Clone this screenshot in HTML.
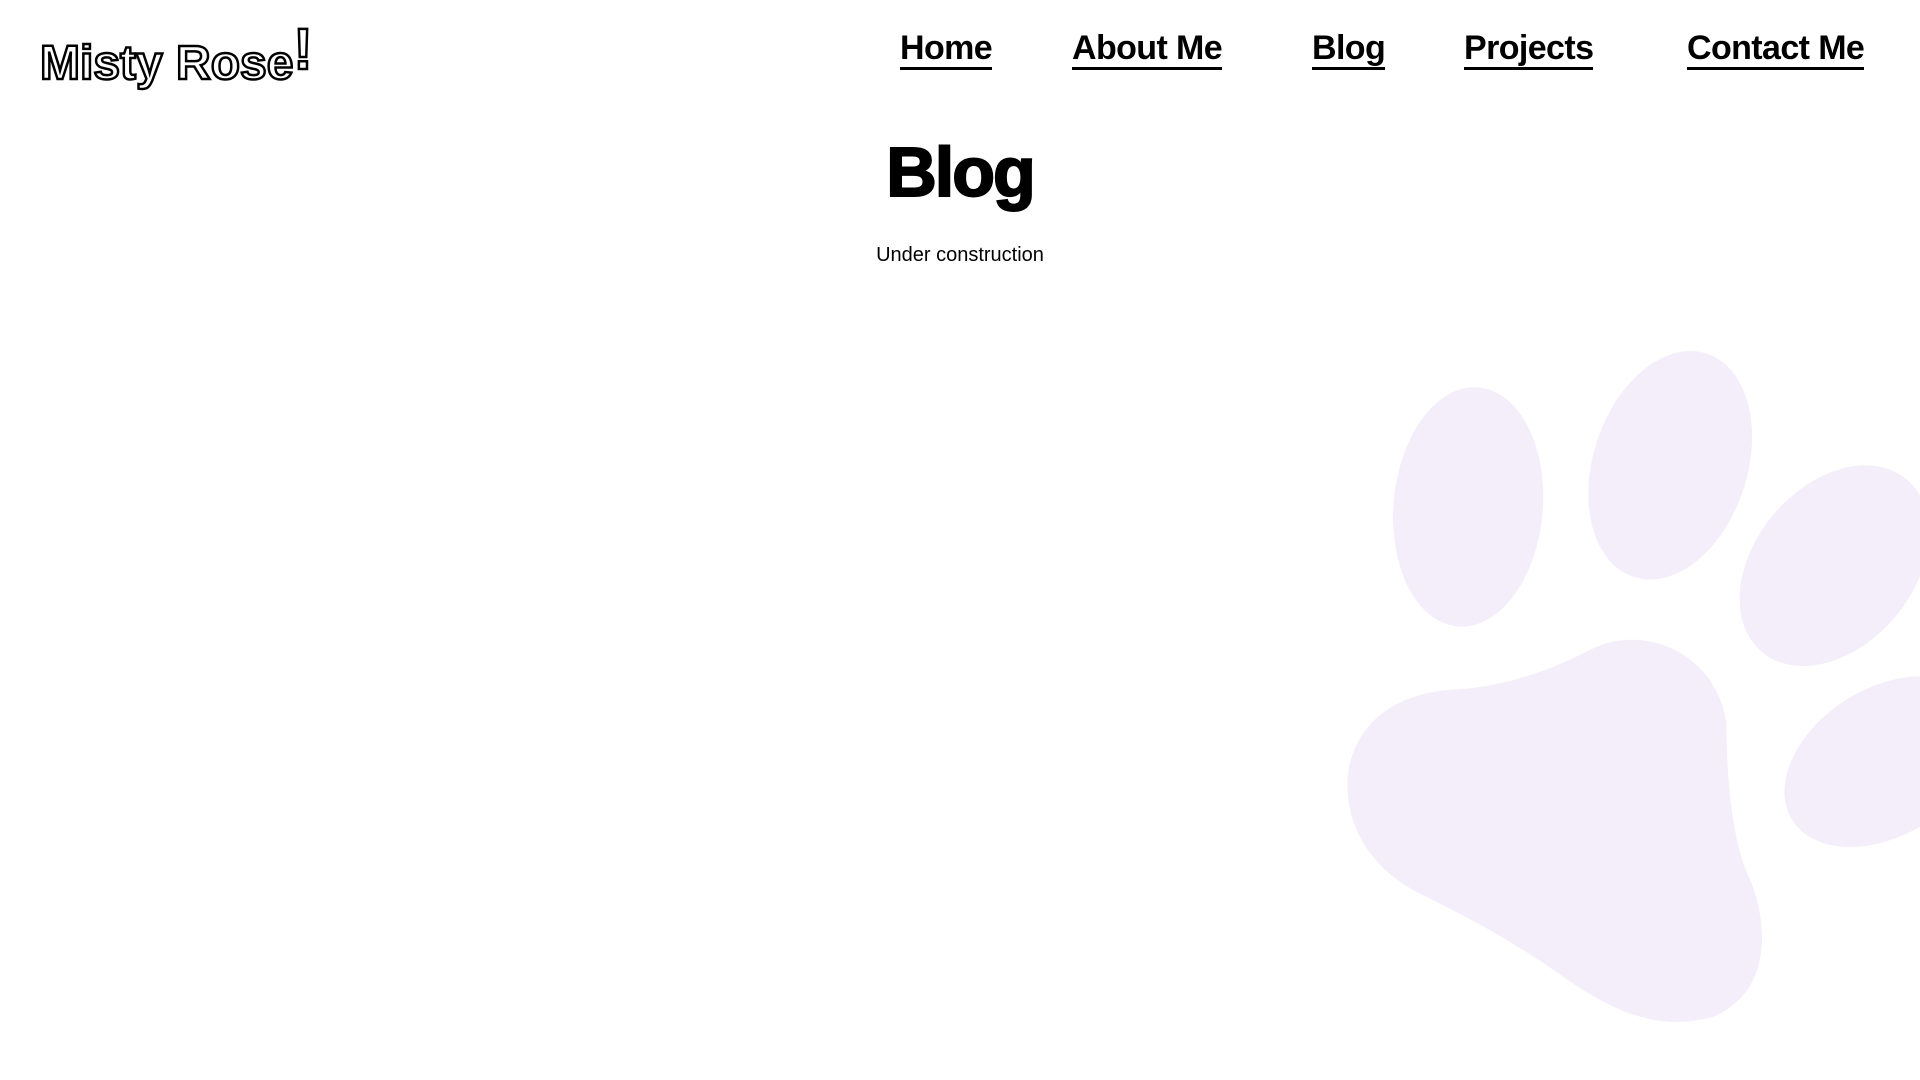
<!DOCTYPE html>
<html><head><meta charset="utf-8"><style>
html,body{margin:0;padding:0;width:1920px;height:1080px;background:#fff;overflow:hidden;font-family:"Liberation Sans",sans-serif;position:relative}
svg.bg{position:absolute;left:0;top:0;width:1920px;height:1080px}
.nav a{position:absolute;top:30px;font-weight:bold;font-size:34px;color:#000;text-decoration:none;border-bottom:3px solid #000;line-height:36px;padding-bottom:1px;letter-spacing:-0.6px}
h1{position:absolute;left:0;width:1920px;text-align:center;top:132px;margin:0;font-size:70px;font-weight:bold;letter-spacing:-2px;line-height:80px;-webkit-text-stroke:2px #000}
p{position:absolute;left:0;width:1920px;text-align:center;top:243px;margin:0;font-size:20px;line-height:24px}
.logo{position:absolute;left:40px;top:26px;font-size:48px;font-weight:bold;color:#fff;-webkit-text-stroke:2.5px #000;letter-spacing:0px;font-family:"Liberation Sans",sans-serif}
</style></head><body>
<svg class="bg" viewBox="0 0 1568 882" preserveAspectRatio="none">
<g fill="#f4eefa">
<ellipse cx="1199" cy="414" rx="61" ry="98" transform="rotate(5 1199 414)"/>
<ellipse cx="1364" cy="380" rx="63" ry="96" transform="rotate(18 1364 380)"/>
<ellipse cx="1498" cy="462" rx="65" ry="92" transform="rotate(40 1498 462)"/>
<ellipse cx="1540" cy="622" rx="60" ry="90" transform="rotate(58 1540 622)"/>
<path d="M1190 563 C1240 560 1280 540 1300 530 C1340 510 1400 530 1410 590 C1410 640 1415 690 1430 720 C1445 760 1445 810 1400 830 C1350 845 1310 820 1280 800 C1230 765 1200 750 1160 730 C1110 705 1095 660 1102 625 C1110 590 1140 565 1190 563 Z"/>
</g>
</svg>
<div class="logo">Misty Rose<span style="font-size:58px;position:relative;top:-10px">!</span></div>
<div class="nav">
<a style="left:900px">Home</a>
<a style="left:1072px">About Me</a>
<a style="left:1312px">Blog</a>
<a style="left:1464px">Projects</a>
<a style="left:1687px">Contact Me</a>
</div>
<h1>Blog</h1>
<p>Under construction</p>
</body></html>
